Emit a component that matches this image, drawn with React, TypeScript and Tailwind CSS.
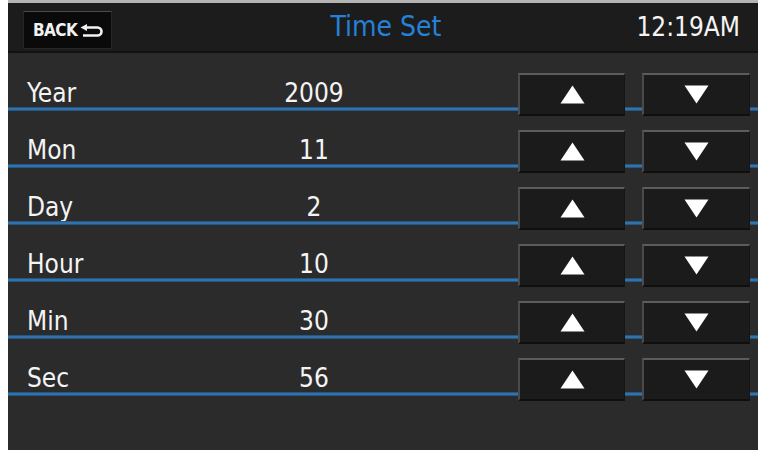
import React from "react";

const rows = [
  { label: "Year", value: "2009" },
  { label: "Mon", value: "11" },
  { label: "Day", value: "2" },
  { label: "Hour", value: "10" },
  { label: "Min", value: "30" },
  { label: "Sec", value: "56" },
];

const font = { fontFamily: '"DejaVu Sans Condensed", "DejaVu Sans", sans-serif' };

function Tri({ up }: { up: boolean }) {
  return (
    <svg width="25" height="19" viewBox="0 0 25 19">
      {up ? (
        <polygon points="12.5,0.5 24.5,18.5 0.5,18.5" fill="#ffffff" />
      ) : (
        <polygon points="0.5,0.5 24.5,0.5 12.5,18.5" fill="#ffffff" />
      )}
    </svg>
  );
}

function Btn({ up, w }: { up: boolean; w: string }) {
  return (
    <div
      className={`${w} h-[43px] flex items-center justify-center bg-[#1b1b1b] border-t-2 border-l-2 border-t-[#5c5c5c] border-l-[#4a4a4a] border-b-2 border-b-[#0f0f0f] border-r border-r-[#151515]`}
    >
      <Tri up={up} />
    </div>
  );
}

export default function App() {
  return (
    <div className="w-[765px] h-[450px] bg-white pl-[8px] pr-[7px] overflow-hidden" style={font}>
      <div className="w-[750px] h-[450px] flex flex-col bg-[#2b2b2b] border-t-[3px] border-t-[#b4b4b4]">
        {/* header */}
        <div className="h-[50px] shrink-0 bg-[#1c1c1c] border-b-2 border-b-[#121212] grid grid-cols-[1fr_auto_1fr] items-center">
          <div className="pl-[15px] flex">
            <div className="mt-[6px] w-[89px] h-[38px] bg-[#0a0a0a] border border-[#262626] border-t-[#4a4a4a] flex items-center pl-[9px] gap-[3px]">
              <span
                className="text-[17px] font-bold text-[#f2f2f2] leading-none tracking-[-0.6px]"
                style={font}
              >
                BACK
              </span>
              <svg width="25" height="13" viewBox="0 0 25 13">
                <polygon points="0.5,3.5 7,0 7,7" fill="#f2f2f2" />
                <path
                  d="M5.5 3.5 H17.5 A4 4 0 0 1 17.5 11.5 H3"
                  stroke="#f2f2f2"
                  strokeWidth="2.6"
                  fill="none"
                />
              </svg>
            </div>
          </div>
          <div className="pl-[6px] text-[28px] leading-none text-[#2581d8]">Time Set</div>
          <div className="flex justify-end pr-[18px] text-[26px] leading-none text-[#f4f4f4]">12:19AM</div>
        </div>
        {/* rows */}
        <div className="pt-[1px] flex flex-col">
          {rows.map((r) => (
            <div key={r.label} className="h-[57px] flex flex-col">
              <div className="h-[53px] flex items-end pl-[19px] pr-[8px]">
                <div className="w-[237px] text-[26px] leading-none text-[#f4f4f4] pb-[1px]">{r.label}</div>
                <div className="w-[100px] text-center text-[26px] leading-none text-[#f4f4f4] pb-[1px]">{r.value}</div>
                <div className="flex-1" />
                <div className="relative top-[9px] z-10 flex gap-[17px]">
                  <Btn up={true} w="w-[107px]" />
                  <Btn up={false} w="w-[108px]" />
                </div>
              </div>
              <div className="h-[4px] bg-linear-to-b from-[#1c4a72] via-[#3b80bd] to-[#1c4a72]" />
            </div>
          ))}
        </div>
      </div>
    </div>
  );
}
